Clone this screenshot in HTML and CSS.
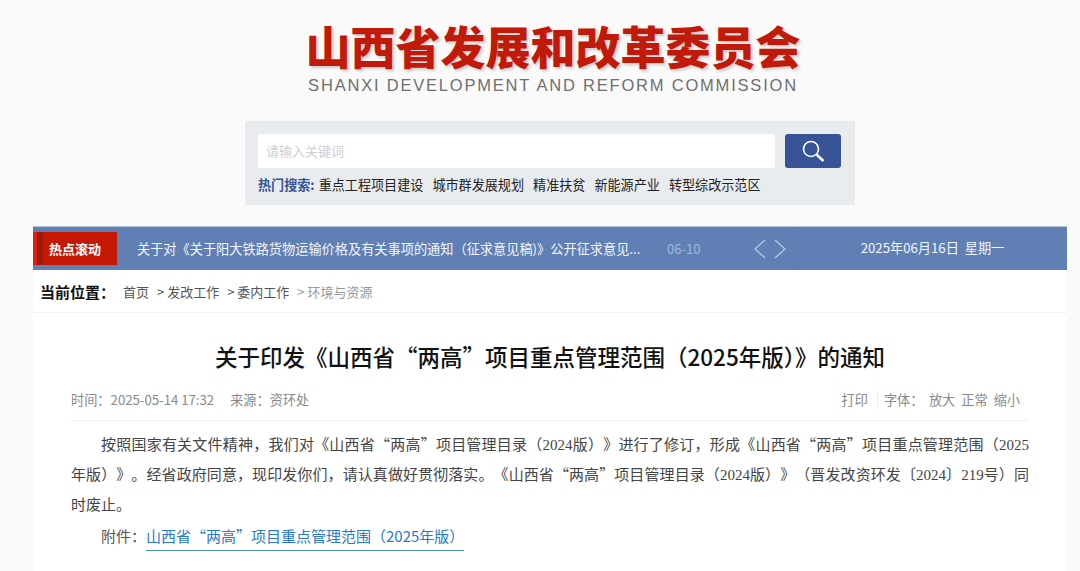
FILE: index.html
```html
<!DOCTYPE html>
<html lang="zh-CN">
<head>
    <meta charset="UTF-8">
    <meta name="viewport" content="width=device-width, initial-scale=1.0">
    <title>关于印发《山西省“两高”项目重点管理范围（2025年版）》的通知</title>
    <link rel="stylesheet" href="styles.css">
</head>
<body>
    <header class="logo">
        <div class="logo-cn">山西省发展和改革委员会</div>
        <div class="logo-en">SHANXI DEVELOPMENT AND REFORM COMMISSION</div>
    </header>

    <div class="search-panel">
        <div class="search-row">
            <div class="search-input">请输入关键词</div>
            <div class="search-btn">
                <svg width="24" height="24" viewBox="0 0 24 24" fill="none" stroke="#fff">
                    <circle cx="10" cy="10" r="7.5" stroke-width="1.6"/>
                    <path d="M15.5 15.5 L22.5 22" stroke-width="2.4"/>
                </svg>
            </div>
        </div>
        <div class="hot-row">
            <b>热门搜索:</b>
            <span class="hot-first">重点工程项目建设</span>
            <span>城市群发展规划</span>
            <span>精准扶贫</span>
            <span>新能源产业</span>
            <span>转型综改示范区</span>
        </div>
    </div>

    <div class="wrap">
        <div class="ticker">
            <div class="ticker-label">热点滚动</div>
            <div class="ticker-text">关于对《关于阳大铁路货物运输价格及有关事项的通知（征求意见稿)》公开征求意见...</div>
            <div class="ticker-date">06-10</div>
            <div class="ticker-arrows">
                <svg width="13" height="20" viewBox="0 0 13 20" fill="none" stroke="#b4c4de" stroke-width="1.4"><path d="M12 1 L2 10 L12 19"/></svg>
                <svg width="13" height="20" viewBox="0 0 13 20" fill="none" stroke="#b4c4de" stroke-width="1.4"><path d="M1 1 L11 10 L1 19"/></svg>
            </div>
            <div class="today">2025年06月16日&nbsp; 星期一</div>
        </div>

        <div class="crumbs">
            <b>当前位置：</b>
            <span class="crumb-first">首页</span>
            <span class="crumb">&gt;&nbsp;发改工作</span>
            <span class="crumb">&gt;&nbsp;委内工作</span>
            <span class="crumb crumb-last">&gt;&nbsp;环境与资源</span>
        </div>

        <div class="article">
            <h1>关于印发《山西省“两高”项目重点管理范围（2025年版）》的通知</h1>
            <div class="meta">
                <div class="meta-left">
                    <span>时间：2025-05-14 17:32</span>
                    <span>来源：资环处</span>
                </div>
                <div class="meta-right">
                    <span class="print">打印</span>
                    <span class="font-label">字体：</span>
                    <span>放大</span>
                    <span>正常</span>
                    <span>缩小</span>
                </div>
            </div>
            <p class="body-text">按照国家有关文件精神，我们对《山西省“两高”项目管理目录（<span class="num">2024</span>版）》进行了修订，形成《山西省“两高”项目重点管理范围（<span class="num">2025</span>年版）》。经省政府同意，现印发你们，请认真做好贯彻落实。《山西省“两高”项目管理目录（<span class="num">2024</span>版）》（晋发改资环发〔<span class="num">2024</span>〕<span class="num">219</span>号）同时废止。</p>
            <p class="attach">附件：<a href="#">山西省“两高”项目重点管理范围（2025年版）</a></p>
        </div>
    </div>
</body>
</html>
```

FILE: styles.css
```css
html {
    overflow: hidden;
}
body {
    margin: 0;
    width: 1100px;
    height: 571px;
    overflow: hidden;
    background-color: #fafafa;
    font-family: "Noto Sans CJK SC", "Noto Sans", sans-serif;
    color: #333;
}
.logo {
    height: 121px;
    padding-left: 6px;
    box-sizing: border-box;
    display: flex;
    flex-direction: column;
    align-items: center;
}
.logo-cn {
    margin-top: 16px;
    font-size: 45px;
    line-height: 59px;
    font-weight: 900;
    color: #c11a0a;
    text-shadow: 2px 2px 3px rgba(0, 0, 0, 0.2);
    white-space: nowrap;
}
.logo-en {
    font-family: "Liberation Sans", sans-serif;
    font-size: 16.5px;
    line-height: 20px;
    letter-spacing: 1.8px;
    color: #6f6f6f;
    white-space: nowrap;
}
.search-panel {
    width: 610px;
    height: 84px;
    margin: 0 auto 21px;
    padding: 13px;
    box-sizing: border-box;
    background-color: #e9ecef;
}
.search-row {
    display: flex;
    gap: 10px;
}
.search-input {
    width: 517px;
    height: 34px;
    padding-left: 8px;
    box-sizing: border-box;
    background: #fff;
    border-radius: 3px;
    font-size: 13px;
    line-height: 34px;
    color: #ccced3;
}
.search-btn {
    width: 56px;
    height: 34px;
    background-color: #385497;
    border-radius: 3px;
    display: flex;
    align-items: center;
    justify-content: center;
}
.hot-row {
    display: flex;
    margin-top: 7px;
    font-size: 13.1px;
    line-height: 20px;
    color: #222;
    white-space: nowrap;
}
.hot-row b {
    color: #385497;
}
.hot-row span {
    margin-left: 9px;
}
.hot-row .hot-first {
    margin-left: 4px;
}
.wrap {
    width: 1034px;
    height: 345px;
    margin: 0 auto;
    background: #fff;
}
.ticker {
    height: 44px;
    display: flex;
    align-items: center;
    background-color: #6080b5;
    border-top: 1px solid #b5c3da;
    box-sizing: border-box;
    color: #fff;
    font-size: 13px;
    white-space: nowrap;
}
.ticker-label {
    width: 84px;
    height: 33px;
    margin-top: -1px;
    padding-left: 16px;
    box-sizing: border-box;
    line-height: 33px;
    font-weight: 700;
    background: linear-gradient(90deg, #d8200c 0, #d8200c 4px, #a01a08 4px, #a01a08 10px, #c41704 10px);
}
.ticker-text {
    width: 530px;
    margin-left: 20px;
    font-size: 13.2px;
    color: #f2f5fa;
}
.ticker-date {
    width: 86px;
    color: #a4b7d8;
}
.ticker-arrows {
    width: 44px;
    display: flex;
    gap: 8px;
}
.today {
    flex: 1;
    height: 100%;
    line-height: 42px;
    text-align: center;
    font-size: 13.2px;
    border-left: 1px solid #5a79ad;
    color: #f2f5fa;
}
.crumbs {
    height: 43px;
    padding-left: 7px;
    display: flex;
    align-items: center;
    border-bottom: 1px solid #f2f2f2;
    box-sizing: border-box;
    font-size: 13px;
    color: #555;
    white-space: nowrap;
}
.crumbs b {
    width: 83px;
    font-size: 15px;
    color: #111;
}
.crumb {
    margin-left: 8px;
}
.crumb-last {
    color: #999;
}
.article {
    padding: 0 38px;
}
h1 {
    margin: 0;
    padding-top: 27px;
    font-size: 22.5px;
    line-height: 32px;
    font-weight: 500;
    text-align: center;
    color: #111;
}
.meta {
    display: flex;
    justify-content: space-between;
    align-items: center;
    margin-top: 13px;
    height: 28px;
    padding-bottom: 7px;
    border-bottom: 1px solid #f0f0f0;
    font-size: 13.2px;
    color: #8a8a8a;
    white-space: nowrap;
}
.meta-left span {
    margin-right: 13px;
}
.meta-right {
    padding-right: 9px;
    display: flex;
    gap: 6px;
}
.print {
    padding-right: 9px;
    border-right: 1px solid #eee;
}
.font-label {
    width: 39px;
}
.body-text {
    margin: 8px 0 0;
    font-size: 15px;
    line-height: 30px;
    text-indent: 2em;
    text-align: justify;
    text-spacing-trim: space-all;
    color: #444;
}
.num {
    font-family: "Liberation Serif", serif;
    line-height: 0;
}
.attach {
    margin: 3px 0 0;
    padding-left: 30px;
    font-size: 15px;
    line-height: 28px;
    color: #555;
}
.attach a {
    display: inline-block;
    color: #2a78c8;
    text-decoration: none;
    border-bottom: 1px solid #4a8fd8;
}
```
